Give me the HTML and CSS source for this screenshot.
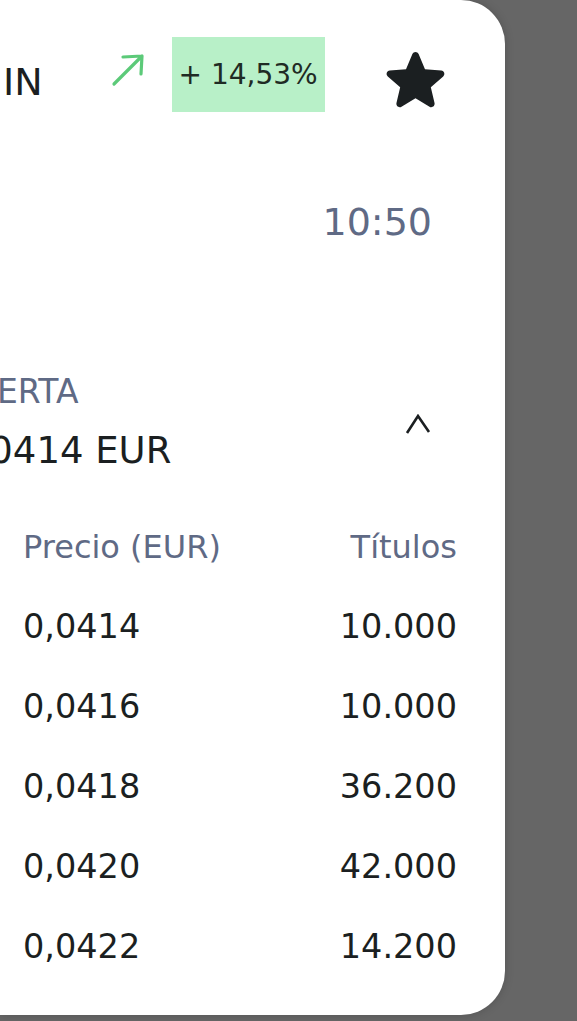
FILE: index.html
```html
<!DOCTYPE html>
<html lang="es">
<head>
    <meta charset="UTF-8">
    <meta name="viewport" content="width=device-width, initial-scale=1.0">
    <title>Oferta</title>
    <link rel="stylesheet" href="styles.css">
</head>
<body>
    <div class="card">
        <header class="top">
            <h1 class="title">IN</h1>
            <svg class="trend" width="40" height="40" viewBox="0 0 40 40">
                <path d="M6 36 L34 8 M15 9 L34 8 L33 26" fill="none" stroke="#5cca79" stroke-width="3.2" stroke-linecap="round" stroke-linejoin="round"/>
            </svg>
            <span class="badge">+ 14,53%</span>
            <svg class="fav" width="81" height="81" viewBox="0 0 24 24">
                <path d="M12 17.27l4.15 2.51c.76.46 1.69-.22 1.49-1.08l-1.1-4.72 3.67-3.18c.67-.58.31-1.68-.57-1.75l-4.83-.41-1.89-4.46c-.34-.81-1.5-.81-1.84 0L9.19 8.63l-4.83.41c-.88.07-1.24 1.17-.57 1.75l3.67 3.18-1.1 4.72c-.2.86.73 1.54 1.49 1.08l4.15-2.5z" fill="#1b1f21"/>
            </svg>
        </header>

        <div class="time">10:50</div>

        <section class="offer">
            <div class="offer-info">
                <div class="offer-label">OFERTA</div>
                <div class="offer-price">0,0414 EUR</div>
            </div>
            <svg class="toggle" width="30" height="20" viewBox="0 0 30 20">
                <path d="M4 19 L15 2 L26 18" fill="none" stroke="#1b1f21" stroke-width="2.6"/>
            </svg>
        </section>

        <table class="book">
            <thead>
                <tr>
                    <th>Precio (EUR)</th>
                    <th class="num">Títulos</th>
                </tr>
            </thead>
            <tbody>
                <tr><td>0,0414</td><td class="num">10.000</td></tr>
                <tr><td>0,0416</td><td class="num">10.000</td></tr>
                <tr><td>0,0418</td><td class="num">36.200</td></tr>
                <tr><td>0,0420</td><td class="num">42.000</td></tr>
                <tr><td>0,0422</td><td class="num">14.200</td></tr>
            </tbody>
        </table>
    </div>
</body>
</html>
```

FILE: styles.css
```css
body {
    margin: 0;
    padding: 0;
    height: 1021px;
    overflow: hidden;
    background: #666666;
    font-family: "DejaVu Sans", "Liberation Sans", sans-serif;
    color: #1b1f21;
}
.card {
    width: 505px;
    height: 1015px;
    padding-top: 37px;
    box-sizing: border-box;
    background: #fff;
    border-radius: 0 44px 44px 0;
    box-shadow: 0 0 10px rgba(0, 0, 0, 0.18);
}
.top {
    display: flex;
    align-items: flex-start;
    height: 75px;
}
.title {
    margin: 26px 0 0 3px;
    font-size: 38px;
    font-weight: normal;
    line-height: 1;
}
.trend {
    margin: 11px 0 0 65px;
}
.badge {
    display: flex;
    align-items: center;
    justify-content: center;
    width: 153px;
    height: 75px;
    margin-left: 24px;
    background: #b8f0c8;
    color: #1f2b24;
    font-size: 28px;
}
.fav {
    margin: 3px 0 0 50px;
}
.time {
    margin-top: 91px;
    padding-right: 73px;
    text-align: right;
    font-size: 38px;
    line-height: 1;
    color: #5f6a85;
}
.offer {
    display: flex;
    justify-content: space-between;
    align-items: flex-start;
    margin-top: 134px;
    padding-right: 72px;
}
.offer-info {
    margin-left: -48px;
}
.offer-label {
    font-size: 33px;
    line-height: 1;
    color: #5f6a85;
}
.offer-price {
    margin-top: 24px;
    margin-left: 2px;
    font-size: 37px;
    line-height: 1;
}
.toggle {
    margin-top: 39px;
}
.book {
    width: 100%;
    margin-top: 38px;
    border-collapse: collapse;
}
.book th, .book td {
    padding: 0;
    height: 80px;
    line-height: 80px;
    text-align: left;
    vertical-align: middle;
}
.book th {
    font-size: 32px;
    font-weight: normal;
    color: #5f6a85;
}
.book td {
    font-size: 33.5px;
}
.book th:first-child, .book td:first-child {
    padding-left: 23px;
}
.book .num {
    text-align: right;
    padding-right: 48px;
}
```
